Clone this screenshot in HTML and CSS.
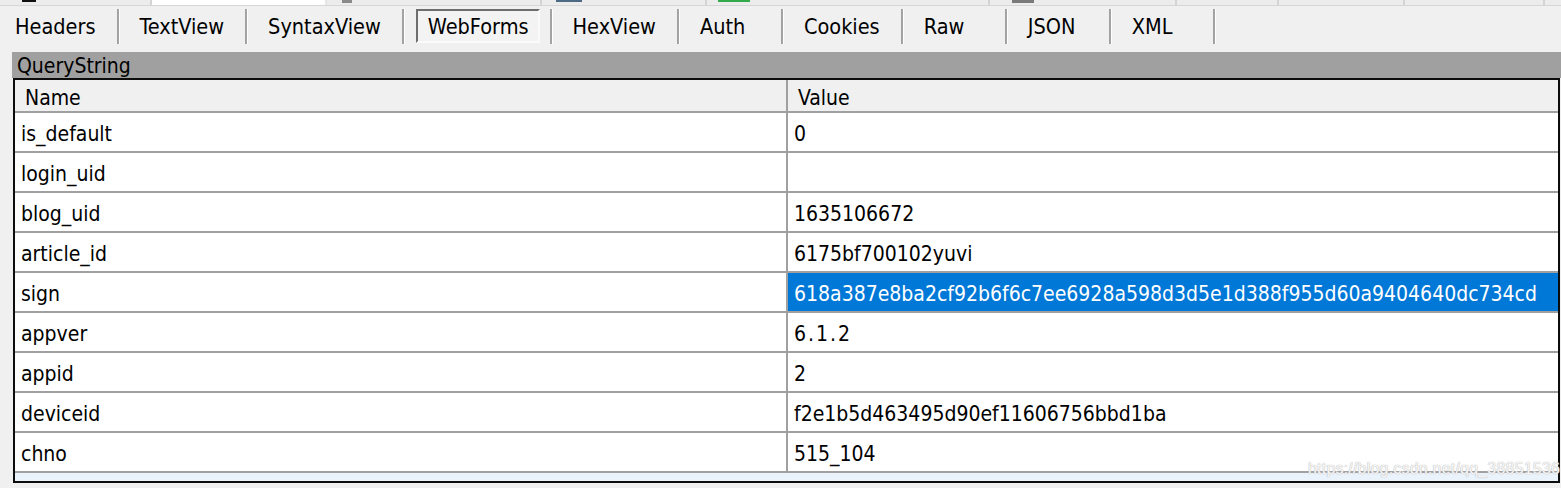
FILE: index.html
```html
<!DOCTYPE html>
<html>
<head>
<meta charset="utf-8">
<link rel="stylesheet" href="styles.css">
</head>
<body>
<div class="topstrip">
  <div class="otab w150"><span class="bit b-black"></span></div>
  <div class="otab w173 osel"></div>
  <div class="otab w213"><span class="bit b-gray1"></span></div>
  <div class="otab w163"><span class="bit b-blue"></span></div>
  <div class="otab w281"><span class="bit b-green"></span></div>
  <div class="otab w185"><span class="bit b-gray2"></span></div>
  <div class="otab w100"></div>
  <div class="otab w124"></div>
  <div class="otab w138"></div>
  <div class="otab wrest"></div>
</div>
<div class="tabbar">
  <span class="tab first">Headers</span><span class="sep"></span>
  <span class="tab">TextView</span><span class="sep"></span>
  <span class="tab">SyntaxView</span><span class="sep"></span>
  <span class="tab sel">WebForms</span><span class="sep"></span>
  <span class="tab">HexView</span><span class="sep"></span>
  <span class="tab">Auth</span><span class="sep"></span>
  <span class="tab">Cookies</span><span class="sep"></span>
  <span class="tab">Raw</span><span class="sep"></span>
  <span class="tab">JSON</span><span class="sep"></span>
  <span class="tab">XML</span><span class="sep"></span>
</div>
<div class="panel">
  <div class="qs-title">QueryString</div>
  <div class="grid-box">
    <div class="grid">
      <div class="hcell name">Name</div><div class="hcell">Value</div>
      <div class="cell name">is_default</div><div class="cell">0</div>
      <div class="cell name">login_uid</div><div class="cell"></div>
      <div class="cell name">blog_uid</div><div class="cell">1635106672</div>
      <div class="cell name">article_id</div><div class="cell">6175bf700102yuvi</div>
      <div class="cell name">sign</div><div class="cell selected">618a387e8ba2cf92b6f6c7ee6928a598d3d5e1d388f955d60a9404640dc734cd</div>
      <div class="cell name">appver</div><div class="cell spaced">6.1.2</div>
      <div class="cell name">appid</div><div class="cell">2</div>
      <div class="cell name">deviceid</div><div class="cell">f2e1b5d463495d90ef11606756bbd1ba</div>
      <div class="cell name">chno</div><div class="cell">515_104</div>
    </div>
    <div class="grid-foot"></div>
  </div>
</div>
<div class="watermark">https://blog.csdn.net/qq_38851536</div>
</body>
</html>
```
FILE: styles.css
```css
html, body {
  margin: 0;
  padding: 0;
}
body {
  width: 1561px;
  height: 488px;
  overflow: hidden;
  background: #f0f0f0;
  color: #000;
  font-family: "DejaVu Sans Condensed", "DejaVu Sans", sans-serif;
  font-stretch: condensed;
  font-size: 21px;
  position: relative;
}

/* outer tab strip remnants */
.topstrip {
  display: flex;
  height: 5px;
  border-bottom: 1px solid #d6d6d6;
}
.otab {
  position: relative;
  height: 5px;
  background: #ececec;
  border-right: 2px solid #d4d4d4;
  box-sizing: border-box;
}
.osel { background: #fff; border-right-color: #e6e6e6; }
.w150 { width: 152px; }
.w173 { width: 175px; }
.w213 { width: 215px; }
.w163 { width: 165px; }
.w281 { width: 283px; }
.w185 { width: 187px; }
.w100 { width: 102px; }
.w124 { width: 126px; }
.w138 { width: 140px; }
.wrest { flex: 1; border-right: none; }
.bit { position: absolute; top: 0; height: 2px; }
.b-black { left: 22px; width: 14px; background: #111; }
.b-gray1 { left: 15px; width: 10px; height: 3px; background: #8a8a8a; }
.b-blue { left: 14px; width: 26px; background: #4c6a86; }
.b-green { left: 11px; width: 32px; background: #32a94a; }
.b-gray2 { left: 22px; width: 22px; height: 3px; background: #7a7a7a; }

/* toolbar of inspector tabs */
.tabbar {
  display: flex;
  align-items: center;
  height: 40px;
  font-size: 21.5px;
}
.tab {
  min-width: 102px;
  padding: 2px 21px 0 21px;
  line-height: 32px;
  height: 34px;
  box-sizing: border-box;
}
.tab.first { padding-left: 15px; min-width: 0; }
.tab.sel {
  min-width: 0;
  margin: 0 10px 0 12px;
  padding: 0 9px 0 10px;
  border: 2px solid;
  border-color: #6e6e6e #fafafa #fafafa #6e6e6e;
  background: #f3f3f3;
  line-height: 31px;
}
.sep {
  width: 2px;
  height: 35px;
  background: #a3a3a3;
  box-shadow: 1px 0 0 #fff;
}

/* QueryString panel */
.panel {
  margin-top: 6px;
  margin-left: 12px;
}
.qs-title {
  background: #a0a0a0;
  height: 26px;
  line-height: 29px;
  padding-left: 5px;
}
.grid-box {
  margin-left: 1px;
  width: 1547px;
  box-sizing: border-box;
  border: 2px solid #0c0c0c;
  background: #fff;
}
.grid {
  display: grid;
  grid-template-columns: 773px 1fr;
}
.hcell {
  background: #f0f0f0;
  height: 33px;
  line-height: 33px;
  padding-top: 2px;
  padding-left: 10px;
  border-bottom: 2px solid #a0a0a0;
  box-sizing: border-box;
}
.cell {
  height: 40px;
  line-height: 38px;
  padding-top: 2px;
  padding-left: 6px;
  border-bottom: 2px solid #a0a0a0;
  box-sizing: border-box;
  white-space: nowrap;
}
.name { border-right: 2px solid #a0a0a0; }
.selected {
  background: #0078d7;
  background-clip: padding-box;
  color: #fff;
}
.spaced { letter-spacing: 2px; }
.grid-foot {
  height: 8px;
  background: #eaf2fb;
}

.watermark {
  position: absolute;
  left: 1308px;
  top: 460px;
  font-family: "Liberation Sans", Arial, sans-serif;
  font-stretch: normal;
  font-size: 16px;
  color: rgba(255, 255, 255, 0.85);
  text-shadow: 0 0 1px #bdbdbd, 0 0 1px #bdbdbd;
  letter-spacing: 0.2px;
}
```
